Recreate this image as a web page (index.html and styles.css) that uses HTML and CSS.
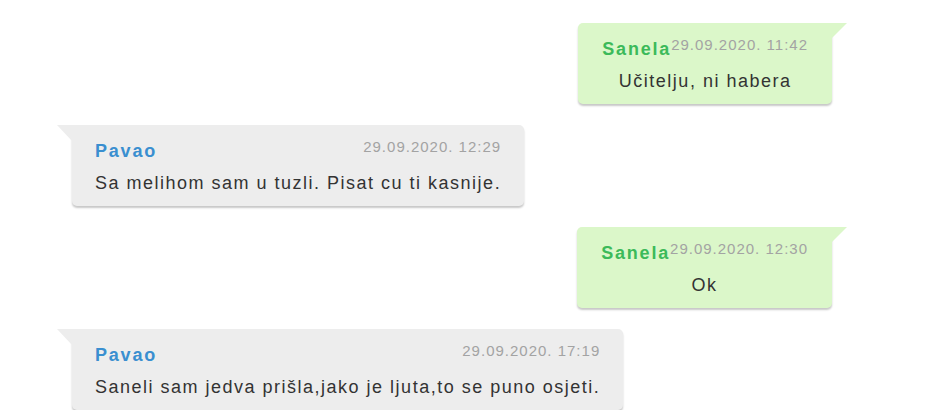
FILE: index.html
```html
<!DOCTYPE html>
<html lang="hr">
<head>
    <meta charset="UTF-8">
    <meta name="viewport" content="width=device-width, initial-scale=1.0">
    <title>Poruke</title>
    <link rel="stylesheet" href="styles.css">
</head>
<body>

    <!-- Chat messages -->
    <div class="chat">
        <div class="msg msg-mine">
            <div class="msg-head"><span class="msg-author">Sanela</span><span class="msg-time">29.09.2020. 11:42</span></div>
            <div class="msg-text">Učitelju, ni habera</div>
        </div>

        <div class="msg msg-theirs">
            <div class="msg-head"><span class="msg-author">Pavao</span><span class="msg-time">29.09.2020. 12:29</span></div>
            <div class="msg-text">Sa melihom sam u tuzli. Pisat cu ti kasnije.</div>
        </div>

        <div class="msg msg-mine">
            <div class="msg-head"><span class="msg-author">Sanela</span><span class="msg-time">29.09.2020. 12:30</span></div>
            <div class="msg-text">Ok</div>
        </div>

        <div class="msg msg-theirs">
            <div class="msg-head"><span class="msg-author">Pavao</span><span class="msg-time">29.09.2020. 17:19</span></div>
            <div class="msg-text">Saneli sam jedva prišla,jako je ljuta,to se puno osjeti.</div>
        </div>
    </div>

</body>
</html>
```

FILE: styles.css
```css
/* Reset */
* {
    margin: 0;
    padding: 0;
    box-sizing: border-box;
}

body {
    font-family: "Liberation Sans", Arial, sans-serif;
    background: #ffffff;
    color: #333333;
}

/* Chat column */
.chat {
    display: flex;
    flex-direction: column;
    align-items: flex-start;
    gap: 21px;
    padding: 23px 108px 0 72px;
}

/* Message bubble */
.msg {
    position: relative;
    padding: 12px 23px 9px 23px;
    border-radius: 5px;
    box-shadow: 0 2px 2px rgba(0, 0, 0, 0.22);
}

.msg::before {
    content: "";
    position: absolute;
    top: 0;
    width: 0;
    height: 0;
}

.msg-theirs {
    background: #ededed;
    border-top-left-radius: 0;
}

.msg-theirs::before {
    left: -15px;
    border-top: 16px solid #ededed;
    border-left: 15px solid transparent;
}

.msg-mine {
    align-self: flex-end;
    background: #dbf7c9;
    border-top-right-radius: 0;
    padding: 12px 24px 9px 24px;
    text-align: center;
}

.msg-mine::before {
    right: -15px;
    border-top: 15px solid #dbf7c9;
    border-right: 15px solid transparent;
}

/* Name + date row */
.msg-head {
    display: flex;
    align-items: flex-start;
}

.msg-theirs .msg-head {
    justify-content: space-between;
    gap: 20px;
}

.msg-mine .msg-head {
    justify-content: center;
}

.msg-author {
    font-size: 18px;
    font-weight: bold;
    line-height: 28px;
    letter-spacing: 1.8px;
}

.msg-theirs .msg-author {
    color: #3a8fd0;
}

.msg-mine .msg-author {
    color: #3cba5a;
}

.msg-time {
    font-size: 15px;
    line-height: 20px;
    letter-spacing: 1px;
    color: #a3a3a3;
}

/* Message text */
.msg-text {
    margin-top: 4px;
    font-size: 18px;
    line-height: 28px;
    letter-spacing: 1.5px;
    color: #333333;
}
```
